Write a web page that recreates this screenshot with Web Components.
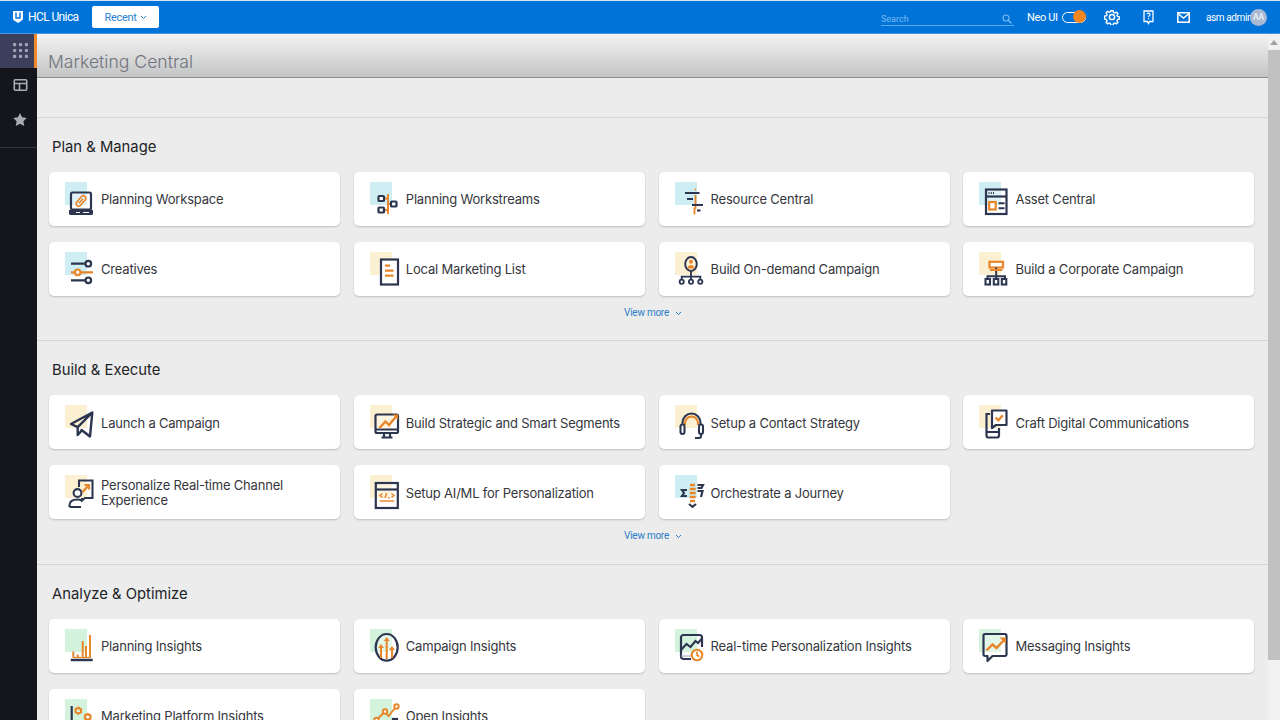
<!DOCTYPE html>
<html><head><meta charset="utf-8"><title>Marketing Central</title>
<style>html,body{margin:0;height:720px;overflow:hidden;background:#ececec;font-family:Inter,"Liberation Sans",sans-serif}</style>
</head><body>
<hcl-app>
  <top-bar slot="top"></top-bar>
  <side-rail slot="rail"></side-rail>
  <title-band slot="band">Marketing Central</title-band>
  <hub-section title="Plan &amp; Manage" more>
    <hub-card icon="laptop" tint="b">Planning Workspace</hub-card>
    <hub-card icon="streams" tint="b">Planning Workstreams</hub-card>
    <hub-card icon="resource" tint="b">Resource Central</hub-card>
    <hub-card icon="asset" tint="b">Asset Central</hub-card>
    <hub-card icon="sliders" tint="b">Creatives</hub-card>
    <hub-card icon="list" tint="y">Local Marketing List</hub-card>
    <hub-card icon="ondemand" tint="y">Build On-demand Campaign</hub-card>
    <hub-card icon="corp" tint="y">Build a Corporate Campaign</hub-card>
  </hub-section>
  <hub-section title="Build &amp; Execute" more>
    <hub-card icon="plane" tint="y">Launch a Campaign</hub-card>
    <hub-card icon="monitor" tint="y">Build Strategic and Smart Segments</hub-card>
    <hub-card icon="headset" tint="y">Setup a Contact Strategy</hub-card>
    <hub-card icon="craft" tint="y">Craft Digital Communications</hub-card>
    <hub-card icon="person" tint="y">Personalize Real-time Channel Experience</hub-card>
    <hub-card icon="code" tint="y">Setup AI/ML for Personalization</hub-card>
    <hub-card icon="journey" tint="b">Orchestrate a Journey</hub-card>
  </hub-section>
  <hub-section title="Analyze &amp; Optimize">
    <hub-card icon="bars" tint="g">Planning Insights</hub-card>
    <hub-card icon="arrows" tint="g">Campaign Insights</hub-card>
    <hub-card icon="clock" tint="g">Real-time Personalization Insights</hub-card>
    <hub-card icon="msg" tint="g">Messaging Insights</hub-card>
    <hub-card icon="platform" tint="g">Marketing Platform Insights</hub-card>
    <hub-card icon="open" tint="g">Open Insights</hub-card>
  </hub-section>
</hcl-app>
<script>
const N='#2d3650',O='#e8862a';
const ICONS={
laptop:`<rect x="6" y="11.5" width="20" height="17" rx="1.5" fill="#fff" fill-opacity=".35" stroke="${N}" stroke-width="1.8"/><path d="M4 29h24v3.5a1.5 1.5 0 0 1-1.5 1.5h-21A1.5 1.5 0 0 1 4 32.5z" fill="${N}"/><path d="M11 31.5h4M18 31.5h6" stroke="#fff" stroke-width="1"/><g transform="rotate(40 16 20)" fill="none" stroke="${O}" stroke-width="1.3"><rect x="13.5" y="14" width="5" height="12" rx="2.5"/><path d="M16 17v6"/></g>`,
streams:`<path d="M18 13v20M14 17.5h4M14 29h4M18 23h3" stroke="${O}" stroke-width="1.6"/><g fill="#fff" stroke="${N}" stroke-width="1.8"><rect x="8.5" y="15" width="5.5" height="5" rx=".8"/><rect x="8.5" y="26.5" width="5.5" height="5" rx=".8"/><rect x="21" y="20.5" width="5.5" height="5" rx=".8"/></g>`,
resource:`<path d="M20.5 14v14" stroke="${O}" stroke-width="1.5"/><path d="M10 12h14.5M12 18h6M17 24h11" stroke="${N}" stroke-width="1.7"/><path d="M19.5 26.5v7" stroke="${O}" stroke-width="1.5"/><path d="M22 29.5h3.5" stroke="${N}" stroke-width="1.7"/><circle cx="20.5" cy="8.500" r=".9" fill="${O}"/>`,
asset:`<rect x="7" y="8.5" width="20.500" height="24.5" fill="#fff" fill-opacity=".3" stroke="${N}" stroke-width="1.8"/><path d="M7 15.5h20.5" stroke="${N}" stroke-width="1.8"/><path d="M9.5 12h1M11.8 12h1M14 12h1" stroke="${N}" stroke-width="1.5"/><rect x="10.200" y="21" width="6.5" height="7.5" fill="#fff" stroke="${O}" stroke-width="1.8"/><path d="M19.5 22.3h6M19.5 27.3h6" stroke="${N}" stroke-width="1.7"/>`,
sliders:`<path d="M6 12.7h14.5M6 29.3h14.5" stroke="${N}" stroke-width="1.8"/><path d="M6 21.3h4M15.500 21.3h12.5" stroke="${O}" stroke-width="1.8"/><g fill="#fff" stroke-width="1.8"><circle cx="23.3" cy="12.7" r="2.8" stroke="${N}"/><circle cx="12.7" cy="21.3" r="2.8" stroke="${O}"/><circle cx="23.3" cy="29.3" r="2.8" stroke="${N}"/></g>`,
list:`<rect x="11" y="8.5" width="17" height="25" fill="#fff" stroke="${N}" stroke-width="1.8"/><path d="M15 14.7h5M15 19.7h8.5M15 24.7h8.5" stroke="${O}" stroke-width="1.8"/>`,
ondemand:`<ellipse cx="16" cy="13" rx="5.8" ry="7" fill="#fff" fill-opacity=".3" stroke="${N}" stroke-width="1.6"/><circle cx="16" cy="10.8" r="2" fill="${O}"/><path d="M12.5 17.5c.3-2.500 1.800-3.500 3.500-3.500s3.200 1 3.500 3.500z" fill="${O}"/><path d="M16 20v8M6.700 28v-2.300h18.600V28" fill="none" stroke="${N}" stroke-width="1.5"/><g fill="#fff" stroke="${N}" stroke-width="1.5"><circle cx="6.7" cy="30.7" r="2.100"/><circle cx="16" cy="30.7" r="2.100"/><circle cx="25.3" cy="30.7" r="2.100"/></g>`,
corp:`<rect x="10.5" y="10.8" width="13.5" height="5.7" fill="#fff" stroke="${O}" stroke-width="1.8"/><path d="M17.2 16.500v11M8.500 28v-2.700h17.500V28" fill="none" stroke="${N}" stroke-width="1.6"/><path d="M11 19h12.5" stroke="${O}" stroke-width="1.6"/><g fill="#fff" stroke="${N}" stroke-width="1.7"><rect x="6.5" y="28" width="4.5" height="5.5"/><rect x="14.8" y="28" width="4.5" height="5.5"/><rect x="22.8" y="28" width="4.5" height="5.5"/></g>`,
plane:`<path d="M27.3 8.500L6 20l6.700 3.200M27.300 8.500L12.700 23.200V31l4-4.500M27.300 8.500L25 32.500l-8.500-6.500" fill="none" stroke="${N}" stroke-width="2" stroke-linejoin="round" stroke-linecap="round"/>`,
monitor:`<rect x="5.5" y="10.5" width="22.5" height="18.5" rx="1.5" fill="#fff" fill-opacity=".3" stroke="${N}" stroke-width="1.8"/><path d="M5.500 25.500h22.500M14 29v4M20 29v4M11.500 33.500h11" fill="none" stroke="${N}" stroke-width="1.8"/><path d="M9.500 24l6-6.500 3.500 3.500 7.500-9" fill="none" stroke="${O}" stroke-width="2"/><path d="M22.500 10.500h5.500v5.500z" fill="${O}"/>`,
headset:`<path d="M7.500 21v-3a9 9.500 0 0 1 18 0v3" transform="translate(0 1)" fill="none" stroke="${N}" stroke-width="1.7"/><path d="M10 20v-2a6.500 6.500 0 0 1 13 0v2" transform="translate(0 1)" fill="none" stroke="${O}" stroke-width="1.7"/><rect x="5.5" y="20.5" width="4" height="9.5" rx="2" fill="#fff" stroke="${N}" stroke-width="1.7"/><rect x="24" y="20.5" width="4" height="9.5" rx="2" fill="#fff" stroke="${N}" stroke-width="1.7"/><path d="M26 30v2a2 2 0 0 1-2 2h-4" fill="none" stroke="${N}" stroke-width="1.7"/>`,
craft:`<path d="M11 10H7.500v21.500a2 2 0 0 0 2 2H18a2 2 0 0 0 2-2V24M7.500 28h12.500" fill="none" stroke="${N}" stroke-width="1.8"/><path d="M13 6.500h14.500V21H17l-4 3z" fill="#fff" stroke="${N}" stroke-width="1.8" stroke-linejoin="round"/><path d="M16.500 13.500l2.800 2.800 4.500-5" fill="none" stroke="${O}" stroke-width="2"/>`,
person:`<circle cx="12.5" cy="19" r="3.9" fill="#fff" stroke="${N}" stroke-width="1.7"/><path d="M4.500 33v-1.500c0-3.800 3-6 8-6 1.500 0 3 .3 4 .7M4.500 33h11.500" fill="none" stroke="${N}" stroke-width="1.7"/><path d="M14 13v-6.500h13.500V24H20l-3 2.500V24" fill="none" stroke="${N}" stroke-width="1.7"/><path d="M17.500 18l6-6.500M19.500 11h4.500v4.500" fill="none" stroke="${O}" stroke-width="1.8"/>`,
code:`<rect x="5.8" y="9" width="22" height="25" fill="#fff" fill-opacity=".3" stroke="${N}" stroke-width="1.8"/><path d="M5.800 15.500h22" stroke="${N}" stroke-width="1.8"/><path d="M12.500 19.500l-2.500 2 2.500 2M21.500 19.500l2.500 2-2.500 2M16.500 19l-1.500 5M18 24h1.500" fill="none" stroke="${O}" stroke-width="1.2"/><path d="M9.800 27h14.500" stroke="${O}" stroke-width="1.2"/>`,
journey:`<path d="M15 11h5M14.700 15h6M14.700 19h6M14.700 23h6M15 27h5" stroke="${O}" stroke-width="2.2"/><path d="M12 16h-5l2 3-2 3h5M22.500 11H28l-1.500 3h-4M22.500 17h5l-1.500 6" fill="none" stroke="${N}" stroke-width="1.8"/><path d="M14 30l3.500 2.800 3.500-2.800" fill="none" stroke="${N}" stroke-width="1.8"/>`,
bars:`<path d="M8.300 29.500v-6M12.700 29.500v-3M17.700 29.500V13M21 29.500V18M25 29.500V7" stroke="${O}" stroke-width="1.6"/><path d="M8 29.500h18" stroke="${O}" stroke-width="1"/><path d="M5.700 32h22" stroke="${N}" stroke-width="2"/>`,
arrows:`<ellipse cx="16.7" cy="19.3" rx="11" ry="13.3" fill="#fff" fill-opacity=".35" stroke="${N}" stroke-width="1.8"/><path d="M11 30V18M16.700 31V11M22 30V20" stroke="${O}" stroke-width="1.7"/><path d="M8 20l3-4 3 4zM13.700 13l3-4 3 4zM19 22l3-4 3 4z" fill="${O}"/>`,
clock:`<path d="M16 31H8.500a2.500 2.500 0 0 1-2.500-2.500V9.500A2.500 2.500 0 0 1 8.500 7h16A2.500 2.500 0 0 1 27 9.500V19" fill="none" stroke="${N}" stroke-width="1.8"/><path d="M6 22l5.500-6 4 3 5-6 2.500 2 3.500-4" fill="none" stroke="${N}" stroke-width="1.7"/><path d="M6 28h10" stroke="#aab0bf" stroke-width="1"/><circle cx="22" cy="27" r="5.3" fill="#fff" stroke="${O}" stroke-width="1.7"/><path d="M22 23.800V27l2.200 1.700" fill="none" stroke="${O}" stroke-width="1.4"/>`,
msg:`<path d="M6 6h20a1.500 1.500 0 0 1 1.500 1.500v19a1.500 1.500 0 0 1-1.500 1.500H13.500l-5 5V28H6a1.500 1.500 0 0 1-1.500-1.500v-19A1.500 1.500 0 0 1 6 6z" fill="#fff" fill-opacity=".35" stroke="${N}" stroke-width="1.8" stroke-linejoin="round"/><path d="M7.500 22.500l6-6 4 3.500 7.500-8" fill="none" stroke="${O}" stroke-width="2"/><path d="M20.500 9.500h6.500V16z" fill="${O}"/>`,
platform:`<path d="M6.700 8v22" stroke="${N}" stroke-width="1.8"/><path d="M13.300 9.700l2.700 1.500v3l-2.700 1.500-2.700-1.500v-3zM22.700 16l2.700 1.500v3L22.700 22 20 20.500v-3z" fill="none" stroke="${O}" stroke-width="1.8"/>`,
open:`<path d="M8 20.500l6.500-6.500 4 4 6.500-8" fill="none" stroke="${O}" stroke-width="1.6"/><g fill="#fff" stroke="${O}" stroke-width="1.6"><circle cx="6.5" cy="22" r="2.2"/><circle cx="15" cy="13.5" r="2.2"/><circle cx="26.5" cy="8.5" r="2.2"/></g><rect x="23" y="21" width="4" height="14" fill="#fff" stroke="${N}" stroke-width="1.8"/>`
};
const TINT={b:'#cfeef3',y:'#fcf0d3',g:'#d4f3dd'};
const heavy=s=>s.replace(/stroke-width="([\d.]+)"/g,(m,w)=>`stroke-width="${(w*1.22).toFixed(2)}"`);
function def(name,css,html,init){
  customElements.define(name,class extends HTMLElement{
    constructor(){super();this.attachShadow({mode:'open'}).innerHTML=`<style>${css}</style>${typeof html==='function'?html(this):html}`}
    connectedCallback(){init&&init(this)}
  });
}
def('hcl-app',`:host{display:grid;grid-template-columns:37px 1fr 12px;grid-template-rows:34px 44px 1fr;width:1280px;height:720px;overflow:hidden;background:#ececec}
::slotted([slot=top]){grid-column:1/4;grid-row:1}
::slotted([slot=rail]){grid-column:1;grid-row:2/4}
::slotted([slot=band]){grid-column:2;grid-row:2}
.main{grid-column:2;grid-row:3;overflow:hidden;padding-top:39px;min-height:0}
.sb{grid-column:3;grid-row:2/4;background:#f1f1f1;position:relative;display:flex;flex-direction:column}
.up{height:16px;display:flex;align-items:center;justify-content:center}
.up i{border:4px solid transparent;border-top:0;border-bottom:5px solid #a3a3a3}
.th{height:610px;background:#c1c1c1}`,
`<slot name="top"></slot><slot name="rail"></slot><slot name="band"></slot><div class="main"><slot></slot></div><div class="sb"><div class="up"><i></i></div><div class="th"></div></div>`);

def('top-bar',`:host{display:flex;align-items:center;box-sizing:border-box;height:34px;background:#0073d8;border-top:1px solid #d6e6f5;border-bottom:1px solid #3f97e3;color:#fff;font:12px Roboto,sans-serif;padding-left:13px}
svg{display:block}
.logo{width:10px;height:12px;margin-right:5px}
.name{letter-spacing:-.6px;width:50px;white-space:nowrap}
.recent{margin-left:14px;width:67px;height:22px;background:#fff;border-radius:2px;color:#2a7fd0;display:flex;align-items:center;justify-content:center;gap:3px;font-size:11px;letter-spacing:-.3px}
.search{margin-left:722px;width:133px;height:18px;box-sizing:border-box;border-bottom:1px solid #5cabee;display:flex;justify-content:space-between;align-items:center;color:#7bbbf0;font-size:9px;padding-right:2px;padding-top:4px}
.neo{margin-left:13px;width:28px;font-size:11px;letter-spacing:-.35px;white-space:nowrap}
.tog{margin-left:7px;width:24px;height:11px;border:1.3px solid #fff;border-radius:7px;box-sizing:border-box;position:relative}
.tog i{position:absolute;right:-1.3px;top:-2.3px;width:13px;height:13px;border-radius:50%;background:#f5851f}
.g{margin-left:18px}.h{margin-left:23px}.m{margin-left:23px}
.u{margin-left:16px;width:39px;font-size:10px;letter-spacing:-.4px;white-space:nowrap}
.av{margin-left:5px;width:17px;height:17px;border-radius:50%;background:#a9b9d3;color:#fff;font-size:8.5px;display:flex;align-items:center;justify-content:center}`,
`<svg class="logo" viewBox="0 0 10 12"><path d="M0 0h10v7.500a2.500 2.500 0 0 1-2 2.400L5 12l-3-2.100a2.500 2.500 0 0 1-2-2.400z" fill="#fff"/><path d="M3 1.500v5.500h4V1.500" fill="none" stroke="#0073d8" stroke-width="1.4"/></svg>
<span class="name">HCL Unica</span>
<div class="recent"><span>Recent</span><svg width="7" height="5" viewBox="0 0 7 5"><path d="M1 1l2.500 2.500L6 1" fill="none" stroke="#2a7fd0"/></svg></div>
<div class="search"><span>Search</span><svg width="10" height="10" viewBox="0 0 10 10"><circle cx="4" cy="4" r="3" fill="none" stroke="#7bbbf0" stroke-width="1.1"/><path d="M6.300 6.300L9.300 9.300" stroke="#7bbbf0" stroke-width="1.3"/></svg></div>
<span class="neo">Neo UI</span><div class="tog"><i></i></div>
<svg class="g" width="16" height="16" viewBox="0 0 16 16" fill="none" stroke="#fff" stroke-width="1.5"><path d="M6.700 1h2.600l.4 2 1.400.6 1.700-1.100 1.800 1.800-1.100 1.700.6 1.400 2 .4v2.600l-2 .4-.6 1.400 1.100 1.700-1.800 1.800-1.700-1.100-1.400.6-.4 2H6.700l-.4-2-1.400-.6-1.700 1.100-1.800-1.800 1.100-1.700-.6-1.400-2-.4V7l2-.4.6-1.400-1.100-1.700 1.800-1.800 1.700 1.100 1.400-.6z" transform="translate(.8 .8) scale(.9)"/><circle cx="8" cy="8" r="2.600"/></svg>
<svg class="h" width="11" height="15" viewBox="0 0 11 15" fill="none" stroke="#fff" stroke-width="1.3"><path d="M1 1h9v10.500H6.500L5.500 13.500 4.500 11.500H1z"/><path d="M4 4.200c.2-1.500 3.200-1.500 3 .3-.1 1-1.500 1.200-1.500 2.500" stroke-width="1.1"/><path d="M5.500 8v1.200" stroke-width="1.1"/></svg>
<svg class="m" width="13" height="11" viewBox="0 0 13 11" fill="none" stroke="#fff" stroke-width="1.5"><rect x=".8" y=".8" width="11.4" height="9.4"/><path d="M.8 1.500l5.700 4.500 5.700-4.500"/></svg>
<span class="u">asm admin</span><div class="av">AA</div>`);

def('side-rail',`:host{display:block;background:#14161c;color:#b9bcc4}
.it{height:35px;display:flex;align-items:center;justify-content:center;box-sizing:border-box;padding:0 0 2px 3px}
.on{background:#3b3f5c;border-right:3px solid #f08a2c;padding-left:6px;height:34px}
.ln{margin-top:9px;border-top:1px solid #34363d}
svg{display:block}`,
`<div class="it on"><svg width="15" height="15" viewBox="0 0 14 14" fill="#9fa3b3"><rect x="0" y="0" width="3" height="3" rx="1"/><rect x="5.5" y="0" width="3" height="3" rx="1"/><rect x="11" y="0" width="3" height="3" rx="1"/><rect x="0" y="5.5" width="3" height="3" rx="1"/><rect x="5.5" y="5.5" width="3" height="3" rx="1"/><rect x="11" y="5.5" width="3" height="3" rx="1"/><rect x="0" y="11" width="3" height="3" rx="1"/><rect x="5.5" y="11" width="3" height="3" rx="1"/><rect x="11" y="11" width="3" height="3" rx="1"/></svg></div>
<div class="it"><svg width="15" height="12" viewBox="0 0 14 12" fill="none" stroke="#a9acb4" stroke-width="1.6"><rect x=".8" y=".8" width="12.4" height="10.4" rx="1"/><path d="M.8 4.500h12.400M6 4.500v6.700"/></svg></div>
<div class="it"><svg width="14" height="13" viewBox="0 0 24 23" fill="#a9acb4"><path d="M12 0l3.700 7.600 8.300 1.200-6 5.900 1.400 8.300L12 19l-7.400 4L6 14.700 0 8.800l8.300-1.200z"/></svg></div>
<div class="ln"></div>`);

def('title-band',`:host{display:flex;align-items:center;box-sizing:border-box;height:44px;padding:12px 0 0 11px;background:linear-gradient(#f3f3f3,#c3c4c4);border-bottom:1px solid #8d8f90;color:#70747f;font:300 17.6px Inter,sans-serif}`,`<slot></slot>`);

def('hub-section',`:host{display:block;border-top:1px solid #d6d6da;padding:19px 12px 20px 12px;height:223.4px;box-sizing:border-box}
h2{margin:0 0 15px 3px;font:400 14.8px/20px Inter,sans-serif;color:#222327}
.grid{display:grid;grid-template-columns:repeat(4,291px);column-gap:13.8px;row-gap:16px;grid-auto-rows:54px}
.more{height:14px;margin-top:10px;display:flex;align-items:center;justify-content:center;gap:6px;color:#2b80c9;font:10px/14px Roboto,sans-serif;padding-left:1px}
.more span{letter-spacing:-.25px}`,
h=>`<h2></h2><div class="grid"><slot></slot></div>${h.hasAttribute('more')?'<div class="more"><span>View more</span><svg width="7" height="5" viewBox="0 0 7 5"><path d="M1 1l2.500 2.500L6 1" fill="none" stroke="#2b80c9"/></svg></div>':''}`,
h=>{h.shadowRoot.querySelector('h2').textContent=h.getAttribute('title');h.removeAttribute('title')});

def('hub-card',`:host{display:flex;align-items:center;gap:6px;height:54px;box-sizing:border-box;padding-left:16px;background:#fff;border-radius:5px;box-shadow:0 1px 2px rgba(0,0,0,.2);font:13px/15.5px Inter,sans-serif;color:#35373d;letter-spacing:-.2px}
svg{flex:none;display:block}
span{padding:2px 16px 0 0}`,
h=>`<svg width="30" height="36" viewBox="0 0 30 36"><rect x="0" y="1" width="22" height="23" fill="${TINT[h.getAttribute('tint')]}"/>${heavy(ICONS[h.getAttribute('icon')])}</svg><span><slot></slot></span>`);
</script>
</body></html>
